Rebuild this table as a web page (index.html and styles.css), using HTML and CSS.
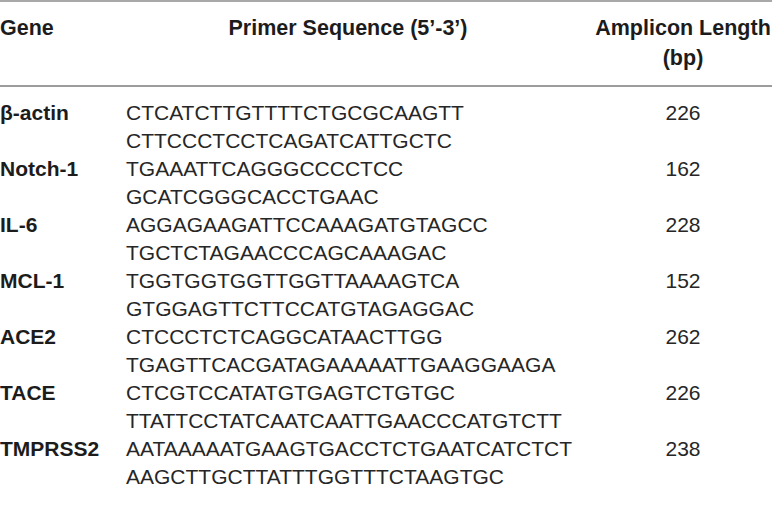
FILE: index.html
```html
<!DOCTYPE html>
<html lang="en">
<head>
<meta charset="utf-8">
<title>Primer table</title>
<link rel="stylesheet" href="styles.css">
</head>
<body>
<table class="primers">
  <colgroup>
    <col class="c-gene">
    <col class="c-seq">
    <col class="c-len">
  </colgroup>
  <thead>
    <tr>
      <th class="h-gene">Gene</th>
      <th class="h-seq">Primer Sequence (5’-3’)</th>
      <th class="h-len">Amplicon Length<br>(bp)</th>
    </tr>
  </thead>
  <tbody>
    <tr>
      <td class="gene">β-actin</td>
      <td class="seq"><div>CTCATCTTGTTTTCTGCGCAAGTT</div><div>CTTCCCTCCTCAGATCATTGCTC</div></td>
      <td class="len">226</td>
    </tr>
    <tr>
      <td class="gene">Notch-1</td>
      <td class="seq"><div>TGAAATTCAGGGCCCCTCC</div><div>GCATCGGGCACCTGAAC</div></td>
      <td class="len">162</td>
    </tr>
    <tr>
      <td class="gene">IL-6</td>
      <td class="seq"><div>AGGAGAAGATTCCAAAGATGTAGCC</div><div>TGCTCTAGAACCCAGCAAAGAC</div></td>
      <td class="len">228</td>
    </tr>
    <tr>
      <td class="gene">MCL-1</td>
      <td class="seq"><div>TGGTGGTGGTTGGTTAAAAGTCA</div><div>GTGGAGTTCTTCCATGTAGAGGAC</div></td>
      <td class="len">152</td>
    </tr>
    <tr>
      <td class="gene">ACE2</td>
      <td class="seq"><div>CTCCCTCTCAGGCATAACTTGG</div><div>TGAGTTCACGATAGAAAAATTGAAGGAAGA</div></td>
      <td class="len">262</td>
    </tr>
    <tr>
      <td class="gene">TACE</td>
      <td class="seq"><div>CTCGTCCATATGTGAGTCTGTGC</div><div>TTATTCCTATCAATCAATTGAACCCATGTCTT</div></td>
      <td class="len">226</td>
    </tr>
    <tr>
      <td class="gene">TMPRSS2</td>
      <td class="seq"><div>AATAAAAATGAAGTGACCTCTGAATCATCTCT</div><div>AAGCTTGCTTATTTGGTTTCTAAGTGC</div></td>
      <td class="len">238</td>
    </tr>
  </tbody>
</table>
</body>
</html>
```
FILE: styles.css
```css
html, body {
  margin: 0;
  padding: 0;
  background: #ffffff;
}

.primers {
  width: 772px;
  table-layout: fixed;
  border-collapse: collapse;
  border-top: 2px solid #a8a8a8;
  color: #1c1c1c;
  font-family: "Liberation Sans", Arial, sans-serif;
}

.c-gene { width: 126px; }
.c-seq { width: 468px; }
.c-len { width: 178px; }

.primers th {
  font-weight: bold;
  font-size: 21.5px;
  line-height: 30px;
  vertical-align: top;
  padding: 11px 0 12px 0;
  border-bottom: 2px solid #9c9c9c;
  white-space: nowrap;
}

.h-gene { text-align: left; }
.h-seq { text-align: center; padding-right: 24px !important; }
.h-len { text-align: center; }

.primers td {
  vertical-align: top;
  padding: 0;
  line-height: 28px;
}

.primers tbody tr:first-child td {
  padding-top: 12px;
}

.gene {
  font-weight: bold;
  font-size: 21px;
  white-space: nowrap;
}

.seq {
  font-size: 21px;
  color: #262626;
  white-space: nowrap;
}

.len {
  text-align: center;
  font-size: 21px;
  color: #262626;
}
```
